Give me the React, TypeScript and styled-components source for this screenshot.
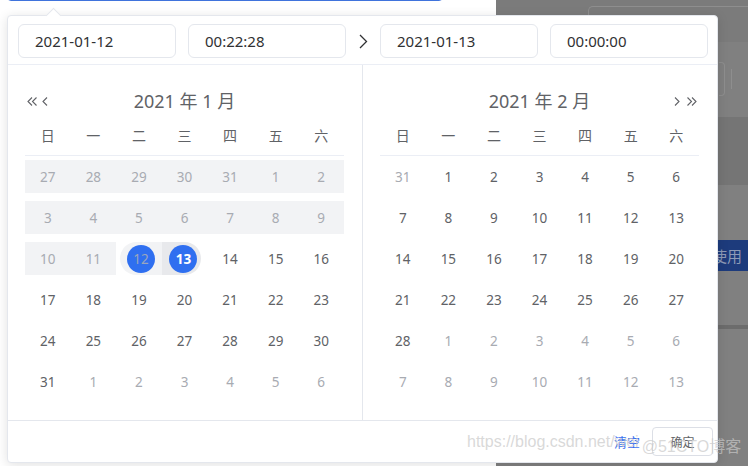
import React from "react";
import styled, { createGlobalStyle, css } from "styled-components";

const Global = createGlobalStyle`
  html, body { margin: 0; padding: 0; }
  body { width: 748px; height: 466px; overflow: hidden; background: #fff; font-family: "Noto Sans", "Noto Sans CJK SC", sans-serif; }
`;

const Page = styled.div`
  position: relative;
  width: 748px;
  height: 466px;
  display: flex;
  overflow: hidden;
`;

/* ---------- backdrop (page behind the popover) ---------- */
const LeftPane = styled.div`
  width: 496px;
  background: #fff;
  display: flex;
  flex-direction: column;
`;

const FocusedInput = styled.div`
  margin: -32px 0 0 7px;
  width: 436px;
  height: 33px;
  border: 1px solid #3f73dc;
  border-radius: 4px;
  box-sizing: border-box;
`;

const RightPane = styled.div`
  flex: 1;
  background: #808080;
  display: flex;
  flex-direction: column;
`;

const Band = styled.div<{ $h: number; $bg: string }>`
  height: ${(p) => p.$h}px;
  background: ${(p) => p.$bg};
  display: flex;
  align-items: flex-start;
  flex-shrink: 0;
`;

const GhostBox = styled.div`
  margin: 6px 0 0 92px;
  flex: 1;
  height: 40px;
  border: 1px solid #8e8e8e;
  border-right: none;
  border-radius: 5px 0 0 5px;
`;

const GhostToolbar = styled.div`
  margin: 20px 0 0 auto;
  width: 29px;
  height: 34px;
  display: flex;
  align-items: center;
`;

const GhostField = styled.div`
  width: 5px;
  height: 32px;
  border: 1px solid #8e8e8e;
  border-left: none;
  border-radius: 0 4px 4px 0;
`;

const GhostSep = styled.div`
  width: 1px;
  height: 20px;
  margin-left: 6px;
  background: #8e8e8e;
`;

const GhostPrimary = styled.div`
  margin-left: 16px;
  flex: 1;
  height: 34px;
  background: #1b3a7a;
`;

const UseButton = styled.div`
  margin: 55px 0 0 auto;
  width: 80px;
  height: 31px;
  background: #1d3b7c;
  color: #8d9ab6;
  font: 15px "Noto Sans CJK SC", sans-serif;
  display: flex;
  align-items: center;
  justify-content: flex-end;
  padding-right: 6px;
  box-sizing: border-box;
`;

/* ---------- popover ---------- */
const Popover = styled.div`
  position: absolute;
  left: 7px;
  top: 15px;
  width: 711px;
  height: 448px;
  box-sizing: border-box;
  background: #fff;
  border: 1px solid #e4e7ed;
  border-radius: 4px;
  box-shadow: 0 2px 12px rgba(0, 0, 0, 0.12);
  display: flex;
  flex-direction: column;

  &::before {
    content: "";
    position: absolute;
    left: 40px;
    top: -6px;
    width: 10px;
    height: 10px;
    background: #fff;
    border-left: 1px solid #e4e7ed;
    border-top: 1px solid #e4e7ed;
    transform: rotate(45deg);
  }
`;

const TimeHeader = styled.div`
  height: 49px;
  box-sizing: border-box;
  padding: 8px 9px 0 10px;
  border-bottom: 1px solid #ebeef5;
  display: flex;
  align-items: flex-start;
`;

const FieldGroup = styled.div`
  display: flex;
  gap: 12px;
`;

const Field = styled.div`
  width: 158px;
  height: 34px;
  box-sizing: border-box;
  border: 1px solid #e4e7ed;
  border-radius: 6px;
  padding-left: 16px;
  display: flex;
  align-items: center;
  font: 15px "Noto Sans", sans-serif;
  color: #303133;
`;

const Separator = styled.div`
  width: 34px;
  height: 34px;
  display: flex;
  align-items: center;
  justify-content: center;
`;

const Body = styled.div`
  flex: 1;
  display: flex;
`;

const Panel = styled.div<{ $divider?: boolean }>`
  width: 354px;
  padding: 20px 18px 0 17px;
  box-sizing: border-box;
  ${(p) =>
    p.$divider &&
    css`
      width: 355px;
      border-right: 1px solid #e4e7ed;
    `}
`;

const PanelHead = styled.div`
  height: 30px;
  display: grid;
  grid-template-columns: 1fr auto 1fr;
  align-items: center;
`;

const NavGroup = styled.div<{ $end?: boolean }>`
  display: flex;
  align-items: center;
  gap: ${(p) => (p.$end ? 7 : 5)}px;
  justify-self: ${(p) => (p.$end ? "end" : "start")};
  margin: ${(p) => (p.$end ? "0 2px 0 0" : "0 0 0 2px")};
  padding-top: 2px;
`;

const Title = styled.div`
  font: 18px "Noto Sans", "Noto Sans CJK SC", sans-serif;
  color: #606266;
  white-space: pre;
`;

const Grid = styled.div`
  width: 319px;
  display: grid;
  grid-template-columns: repeat(7, 1fr);
`;

const WeekCell = styled.div`
  height: 40px;
  border-bottom: 1px solid #ebeef5;
  display: flex;
  align-items: center;
  justify-content: center;
  font: 14px "Noto Sans CJK SC", sans-serif;
  color: #606266;
`;

type Kind = "normal" | "other" | "range" | "start" | "end";

const DayCell = styled.div<{ $kind: Kind }>`
  height: 41px;
  display: flex;
  align-items: center;
  ${(p) =>
    p.$kind === "start" &&
    css`
      padding-left: 4px;
    `}
  ${(p) =>
    p.$kind === "end" &&
    css`
      padding-right: 6px;
    `}
`;

const DayBand = styled.div<{ $kind: Kind }>`
  flex: 1;
  height: 33px;
  display: flex;
  align-items: center;
  justify-content: center;
  font: 13.5px "Noto Sans", sans-serif;
  color: ${(p) => (p.$kind === "normal" ? "#606266" : "#a8abb2")};
  background: ${(p) =>
    p.$kind === "range" || p.$kind === "start"
      ? "#f2f3f5"
      : p.$kind === "end"
      ? "#e8e9ec"
      : "transparent"};
  border-radius: ${(p) =>
    p.$kind === "start" ? "17px 0 0 17px" : p.$kind === "end" ? "0 17px 17px 0" : "0"};
`;

const Dot = styled.span<{ $end?: boolean }>`
  width: 28px;
  height: 28px;
  border-radius: 50%;
  background: #2f6ff0;
  display: flex;
  align-items: center;
  justify-content: center;
  color: ${(p) => (p.$end ? "#fff" : "#9aa6bd")};
  font-weight: ${(p) => (p.$end ? 700 : 400)};
  margin-left: ${(p) => (p.$end ? 4 : 0)}px;
`;

const Footer = styled.div`
  height: 41px;
  border-top: 1px solid #e4e7ed;
  display: flex;
  justify-content: flex-end;
  align-items: center;
  gap: 12px;
  padding-right: 4px;
`;

const LinkButton = styled.span`
  font: 13px "Noto Sans CJK SC", sans-serif;
  color: #3a6ff0;
`;

const PlainButton = styled.div`
  height: 29px;
  width: 61px;
  box-sizing: border-box;
  border: 1px solid #dcdfe6;
  border-radius: 4px;
  display: flex;
  align-items: center;
  justify-content: center;
  font: 12px "Noto Sans CJK SC", sans-serif;
  color: #606266;
`;

const Watermark = styled.div`
  position: absolute;
  left: 467px;
  top: 433px;
  display: flex;
  gap: 3px;
  font: 16px "Liberation Sans", "Noto Sans CJK SC", sans-serif;
  color: rgba(200, 200, 200, 0.7);
  pointer-events: none;
  white-space: nowrap;
`;

/* ---------- icons ---------- */
const Chevron = ({ dir, double }: { dir: "l" | "r"; double?: boolean }) => {
  const w = double ? 10 : 6;
  const d =
    dir === "l"
      ? double
        ? "M5 0.5 L1 4.5 L5 8.5 M9.5 0.5 L5.5 4.5 L9.5 8.5"
        : "M5 0.5 L1 4.5 L5 8.5"
      : double
      ? "M0.5 0.5 L4.5 4.5 L0.5 8.5 M5 0.5 L9 4.5 L5 8.5"
      : "M1 0.5 L5 4.5 L1 8.5";
  return (
    <svg width={w} height={9} viewBox={`0 0 ${w} 9`} fill="none">
      <path d={d} stroke="#606266" strokeWidth={1.1} />
    </svg>
  );
};

const RangeArrow = () => (
  <svg width={9} height={15} viewBox="0 0 9 15" fill="none">
    <path d="M1 1 L7.5 7.5 L1 14" stroke="#303133" strokeWidth={1.3} />
  </svg>
);

/* ---------- data ---------- */
type Day = { n: number; k: Kind };
const mk = (nums: number[], k: Kind): Day[] => nums.map((n) => ({ n, k }));
const seq = (a: number, b: number) => Array.from({ length: b - a + 1 }, (_, i) => a + i);

const january: Day[] = [
  ...mk([27, 28, 29, 30, 31, 1, 2], "range"),
  ...mk(seq(3, 9), "range"),
  ...mk([10, 11], "range"),
  { n: 12, k: "start" },
  { n: 13, k: "end" },
  ...mk(seq(14, 30), "normal"),
  { n: 31, k: "normal" },
  ...mk(seq(1, 6), "other"),
];

const february: Day[] = [
  { n: 31, k: "other" },
  ...mk(seq(1, 28), "normal"),
  ...mk(seq(1, 6), "other"),
  ...mk(seq(7, 13), "other"),
];

const WEEK = ["日", "一", "二", "三", "四", "五", "六"];

const Month = ({ title, days, side }: { title: string; days: Day[]; side: "l" | "r" }) => (
  <Panel $divider={side === "l"}>
    <PanelHead>
      {side === "l" ? (
        <NavGroup>
          <Chevron dir="l" double />
          <Chevron dir="l" />
        </NavGroup>
      ) : (
        <span />
      )}
      <Title>{title}</Title>
      {side === "r" ? (
        <NavGroup $end>
          <Chevron dir="r" />
          <Chevron dir="r" double />
        </NavGroup>
      ) : (
        <span />
      )}
    </PanelHead>
    <Grid>
      {WEEK.map((w) => (
        <WeekCell key={w}>{w}</WeekCell>
      ))}
      {days.map((d, i) => (
        <DayCell key={i} $kind={d.k}>
          <DayBand $kind={d.k}>
            {d.k === "start" || d.k === "end" ? <Dot $end={d.k === "end"}>{d.n}</Dot> : d.n}
          </DayBand>
        </DayCell>
      ))}
    </Grid>
  </Panel>
);

export default function App() {
  return (
    <>
      <Global />
      <Page>
        <LeftPane>
          <FocusedInput />
        </LeftPane>
        <RightPane>
          <Band $h={42} $bg="#7b7b7b">
            <GhostBox />
          </Band>
          <Band $h={75} $bg="#808080">
            <GhostToolbar>
              <GhostField />
              <GhostSep />
              <GhostPrimary />
            </GhostToolbar>
          </Band>
          <Band $h={68} $bg="#757575" />
          <Band $h={140} $bg="#808080">
            <UseButton>使用</UseButton>
          </Band>
          <Band $h={4} $bg="#6c6c6c" />
          <Band $h={137} $bg="#808080" />
        </RightPane>

        <Popover>
          <TimeHeader>
            <FieldGroup>
              <Field>2021-01-12</Field>
              <Field>00:22:28</Field>
            </FieldGroup>
            <Separator>
              <RangeArrow />
            </Separator>
            <FieldGroup>
              <Field>2021-01-13</Field>
              <Field>00:00:00</Field>
            </FieldGroup>
          </TimeHeader>
          <Body>
            <Month title="2021 年 1 月" days={january} side="l" />
            <Month title="2021 年 2 月" days={february} side="r" />
          </Body>
          <Footer>
            <LinkButton>清空</LinkButton>
            <PlainButton>确定</PlainButton>
          </Footer>
        </Popover>

        <Watermark>
          <span>https://blog.csdn.net/wei</span>
          <span>@51CTO博客</span>
        </Watermark>
      </Page>
    </>
  );
}
